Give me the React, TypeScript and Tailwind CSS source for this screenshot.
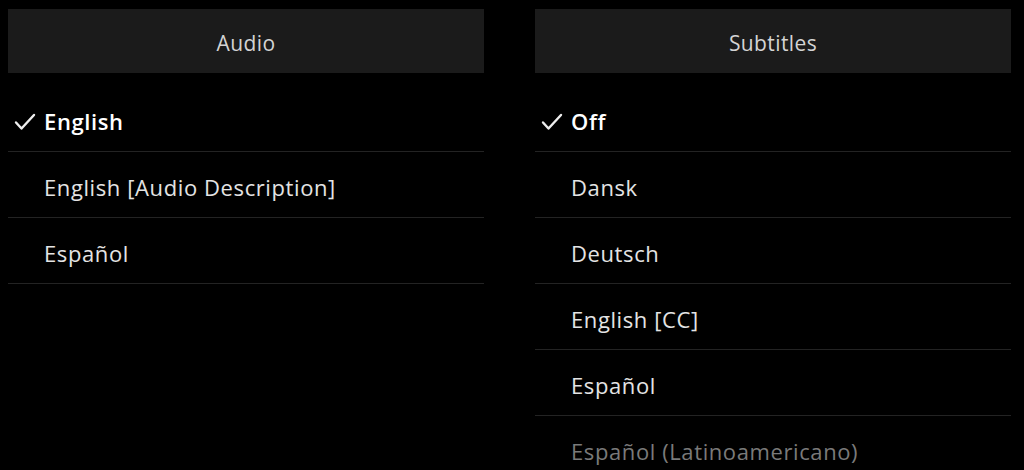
const audio = ["English", "English [Audio Description]", "Español"];
const subs = ["Off", "Dansk", "Deutsch", "English [CC]", "Español", "Español (Latinoamericano)"];

function Check() {
  return (
    <svg viewBox="0 0 22 18" className="w-[22px] h-[18px] text-[#eeeeee]" fill="none" stroke="currentColor" strokeWidth={2.4} strokeLinecap="round" strokeLinejoin="round">
      <path d="M2 9.5l5.5 6L20 2" />
    </svg>
  );
}

function Column({ title, items }: { title: string; items: string[] }) {
  return (
    <div className="w-[476px] flex flex-col">
      <div className="h-16 shrink-0 bg-[#1b1b1b] flex items-center justify-center pt-1.5 text-[21px] tracking-[0.4px] text-[#d4d4d4]">
        {title}
      </div>
      <div className="mt-[13px] shrink-0">
        {items.map((item, i) => (
          <div
            key={item}
            className={`h-[66px] flex items-center pt-1.5 border-b border-[#232323] text-[22px] tracking-[0.6px] ${
              i === 5 ? "text-[#7a7a7a]" : "text-[#e4e4e4]"
            }`}
          >
            <div className="w-9 pl-1.5 flex items-center">{i === 0 && <Check />}</div>
            <span className={i === 0 ? "font-semibold text-white" : ""}>{item}</span>
          </div>
        ))}
      </div>
    </div>
  );
}

export default function App() {
  return (
    <div className="w-[1024px] h-[470px] overflow-hidden bg-black pt-[9px] pl-2 flex items-start gap-[51px] font-['Open_Sans','Liberation_Sans',sans-serif]">
      <Column title="Audio" items={audio} />
      <Column title="Subtitles" items={subs} />
    </div>
  );
}
